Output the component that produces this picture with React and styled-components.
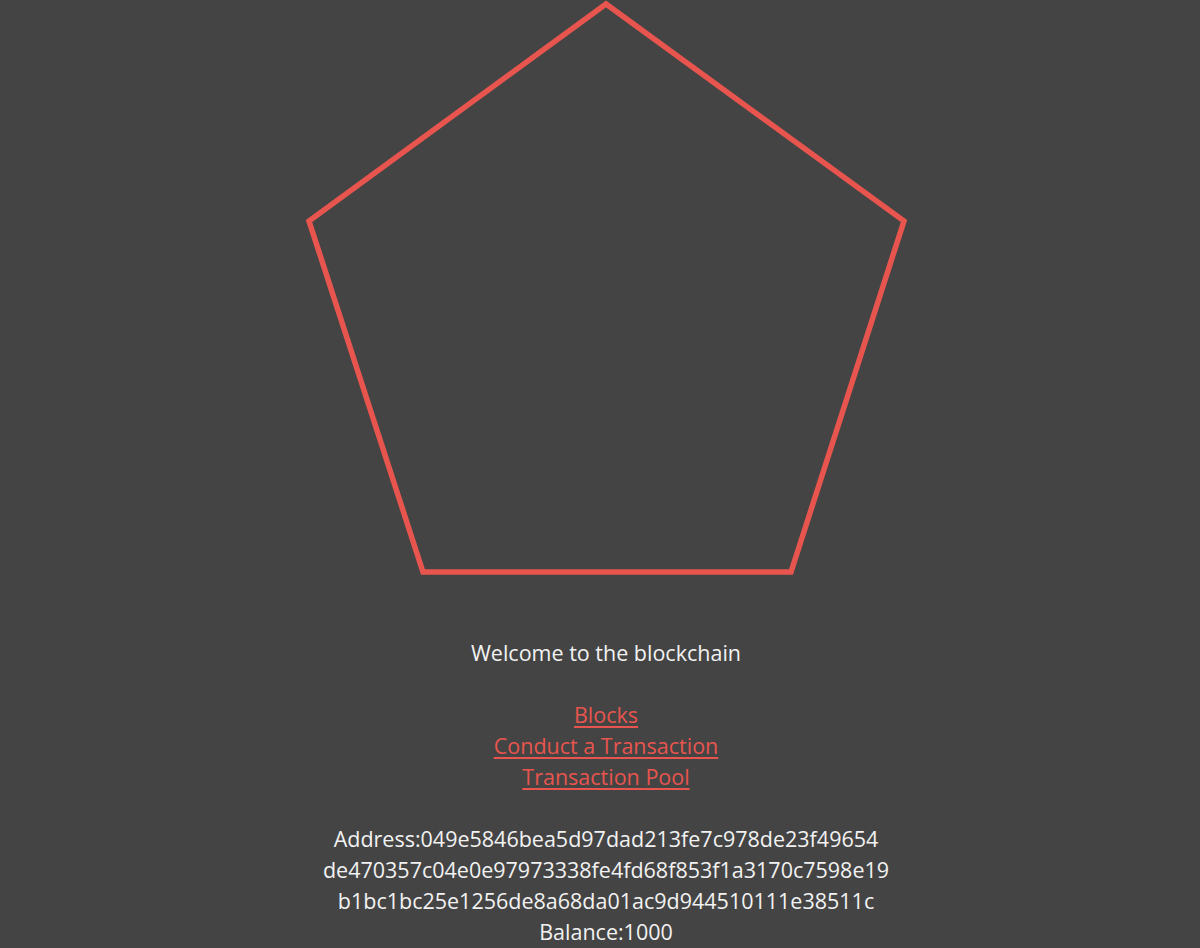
import styled, { createGlobalStyle } from "styled-components";

// 전체 페이지 기본 스타일
const GlobalStyle = createGlobalStyle`
  body {
    margin: 0;
    background: #444444;
    font-family: "Open Sans", "Liberation Sans", sans-serif;
    color: #f2f2f2;
  }
`;

// 가운데 정렬 테두리
const Wrapper = styled.div`
  display: flex;
  flex-direction: column;
  align-items: center;
  padding-left: 12px;
  text-align: center;
  font-size: 21.5px;
  line-height: 31px;
`;

// 로고 영역
const Logo = styled.svg`
  display: block;
  width: 610px;
  height: 590px;
  margin-bottom: 47px;
`;

// 문단 블록
const Section = styled.div`
  display: flex;
  flex-direction: column;
  align-items: center;
  margin-bottom: ${(p) => (p.$gap ? "31px" : "0")};
`;

const Line = styled.div`
  white-space: nowrap;
`;

// 링크
const NavLink = styled.a`
  color: #e8554e;
  text-decoration: underline;
  text-underline-offset: 3px;
  cursor: pointer;
`;

const addressLines = [
  "Address:049e5846bea5d97dad213fe7c978de23f49654",
  "de470357c04e0e97973338fe4fd68f853f1a3170c7598e19",
  "b1bc1bc25e1256de8a68da01ac9d944510111e38511c",
];

const App = () => {
  return (
    <>
      <GlobalStyle />
      <Wrapper>
        <Logo viewBox="0 0 610 590">
          <polygon
            points="305,4 8,221 122,572 490,572 603,221"
            fill="none"
            stroke="#e8554e"
            strokeWidth="5.5"
            strokeLinejoin="miter"
          />
        </Logo>
        <Section $gap>
          <Line>Welcome to the blockchain</Line>
        </Section>
        <Section $gap>
          <NavLink href="#blocks">Blocks</NavLink>
          <NavLink href="#conduct">Conduct a Transaction</NavLink>
          <NavLink href="#pool">Transaction Pool</NavLink>
        </Section>
        <Section>
          {addressLines.map((line) => (
            <Line key={line}>{line}</Line>
          ))}
          <Line>Balance:1000</Line>
        </Section>
      </Wrapper>
    </>
  );
};

export default App;
